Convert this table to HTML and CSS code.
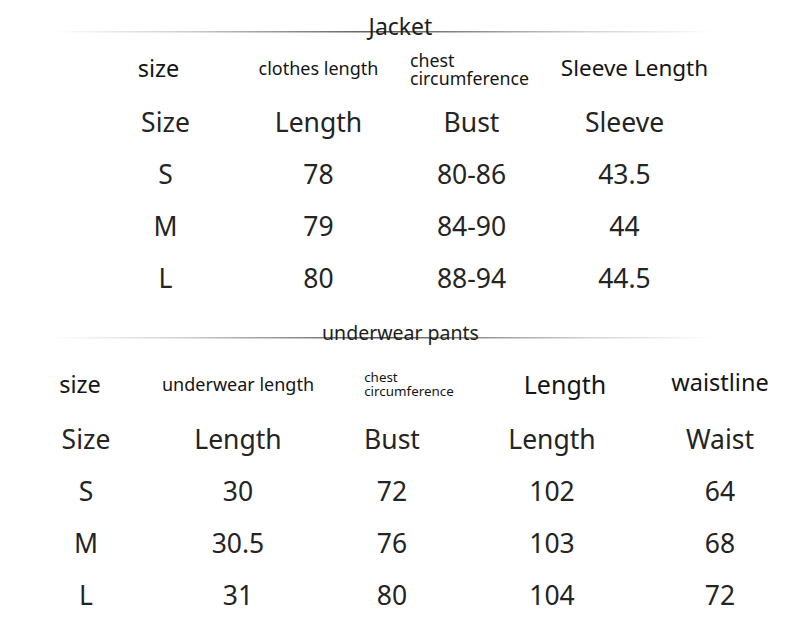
FILE: index.html
```html
<!DOCTYPE html>
<html>
<head>
<meta charset="utf-8">
<link rel="stylesheet" href="styles.css">
</head>
<body>
<div class="page">
  <div class="title title-jacket"><span>Jacket</span></div>
  <div class="table jacket">
    <div class="cell head h-size shift-l7">size</div>
    <div class="cell head h-18">clothes length</div>
    <div class="cell head h-chest">chest<br>circumference</div>
    <div class="cell head h-sleeve shift-r10">Sleeve Length</div>

    <div class="cell">Size</div><div class="cell">Length</div><div class="cell">Bust</div><div class="cell">Sleeve</div>
    <div class="cell">S</div><div class="cell">78</div><div class="cell">80-86</div><div class="cell">43.5</div>
    <div class="cell">M</div><div class="cell">79</div><div class="cell">84-90</div><div class="cell">44</div>
    <div class="cell">L</div><div class="cell">80</div><div class="cell">88-94</div><div class="cell">44.5</div>
  </div>

  <div class="title title-pants"><span>underwear pants</span></div>
  <div class="table pants">
    <div class="cell head h-size shift-l6">size</div>
    <div class="cell head h-18">underwear length</div>
    <div class="cell head h-chest-sm shift-r16">chest<br>circumference</div>
    <div class="cell head h-len shift-r13">Length</div>
    <div class="cell head h-waist">waistline</div>

    <div class="cell">Size</div><div class="cell">Length</div><div class="cell">Bust</div><div class="cell">Length</div><div class="cell">Waist</div>
    <div class="cell">S</div><div class="cell">30</div><div class="cell">72</div><div class="cell">102</div><div class="cell">64</div>
    <div class="cell">M</div><div class="cell">30.5</div><div class="cell">76</div><div class="cell">103</div><div class="cell">68</div>
    <div class="cell">L</div><div class="cell">31</div><div class="cell">80</div><div class="cell">104</div><div class="cell">72</div>
  </div>
</div>
</body>
</html>
```

FILE: styles.css
```css
html, body {
  margin: 0;
  padding: 0;
  background: #ffffff;
  overflow: hidden;
}

.page {
  width: 801px;
  height: 626px;
  font-family: "Noto Sans", "Open Sans", sans-serif;
  color: #1e1e1e;
}

.title {
  display: flex;
  justify-content: center;
  height: 26px;
  line-height: 26px;
  background-image: linear-gradient(90deg,
    rgba(120,120,120,0) 0%,
    rgba(120,120,120,0.35) 20%,
    rgba(70,70,70,0.9) 50%,
    rgba(120,120,120,0.35) 80%,
    rgba(120,120,120,0) 100%);
  background-repeat: no-repeat;
  background-size: 665px 1.5px;
  background-position: 50px 18px;
}

.title-jacket {
  margin-top: 13px;
  font-size: 23px;
}

.title-pants {
  margin-top: 16px;
  font-size: 19.5px;
  background-position: 50px 17px;
}

.table {
  display: grid;
  align-items: center;
  justify-items: center;
}

.jacket {
  padding-left: 89px;
  grid-template-columns: repeat(4, 153px);
  grid-template-rows: 57px repeat(4, 52px);
}

.pants {
  margin-top: 9px;
  padding-left: 10px;
  grid-template-columns: 152px 152px 156px 164px 172px;
  grid-template-rows: 58px repeat(4, 52px);
}

.cell {
  font-size: 26.5px;
  line-height: 30px;
  white-space: nowrap;
  color: #242424;
}

.head {
  color: #151515;
}

.h-size {
  font-size: 23.5px;
}

.h-18 {
  font-size: 18px;
  line-height: 22px;
}

.h-chest {
  font-size: 17.8px;
  line-height: 18px;
  text-align: left;
  padding-top: 2px;
  margin-right: 4px;
}

.h-chest-sm {
  font-size: 13.4px;
  line-height: 14px;
  text-align: left;
}

.h-sleeve {
  font-size: 22.5px;
}

.h-len {
  font-size: 25px;
}

.h-waist {
  font-size: 23.5px;
  padding-bottom: 4px;
}

.shift-l7 { margin-right: 14px; }
.shift-l6 { margin-right: 12px; }
.shift-r10 { margin-left: 20px; }
.shift-r13 { margin-left: 26px; }
.shift-r16 { margin-left: 34px; }
```
